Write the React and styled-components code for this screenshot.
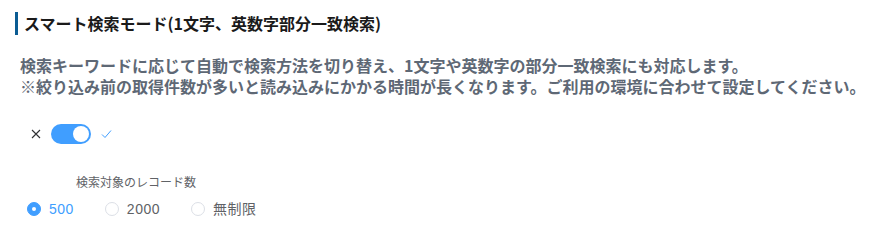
import { useState } from 'react';
import styled, { createGlobalStyle } from 'styled-components';

const GlobalStyle = createGlobalStyle`
  body {
    margin: 0;
    background: #fff;
    font-family: "Noto Sans CJK JP", "Noto Sans", sans-serif;
  }
`;

const options = [
  { value: 500, label: '500' },
  { value: 2000, label: '2000' },
  { value: 0, label: '無制限' },
];

function App() {
  const [smart, setSmart] = useState(true);
  const [limit, setLimit] = useState(500);

  return (
    <Page>
      <GlobalStyle />
      <Title>スマート検索モード(1文字、英数字部分一致検索)</Title>
      <Description>
        検索キーワードに応じて自動で検索方法を切り替え、1文字や英数字の部分一致検索にも対応します。
        <br />
        ※絞り込み前の取得件数が多いと読み込みにかかる時間が長くなります。ご利用の環境に合わせて設定してください。
      </Description>
      <SwitchRow>
        <SideIcon active={!smart}>
          <svg width="10" height="10" viewBox="0 0 10 10">
            <path d="M1 1 L9 9 M9 1 L1 9" stroke="currentColor" strokeWidth="1.1" fill="none" />
          </svg>
        </SideIcon>
        <Switch on={smart} onClick={() => setSmart(!smart)}>
          <Knob on={smart} />
        </Switch>
        <SideIcon active={smart} blue>
          <svg width="11" height="10" viewBox="0 0 11 10">
            <path d="M1 5.5 L4 8.5 L10 1.5" stroke="currentColor" strokeWidth="1" fill="none" />
          </svg>
        </SideIcon>
      </SwitchRow>
      <FieldLabel>検索対象のレコード数</FieldLabel>
      <RadioGroup>
        {options.map((o) => (
          <Radio key={o.value} onClick={() => setLimit(o.value)}>
            <RadioCircle checked={limit === o.value} />
            <RadioText checked={limit === o.value}>{o.label}</RadioText>
          </Radio>
        ))}
      </RadioGroup>
    </Page>
  );
}

export default App;

const Page = styled.div`
  padding: 12px 15px 0;
`;

const Title = styled.h2`
  margin: 0;
  border-left: 3px solid #0b5c93;
  padding-left: 6px;
  font-size: 16px;
  line-height: 23px;
  font-weight: 700;
  color: #1a1a1a;
  white-space: nowrap;
`;

const Description = styled.p`
  margin: 20px 0 0 5px;
  font-size: 16px;
  line-height: 21px;
  font-weight: 700;
  color: #5e6875;
  white-space: nowrap;
`;

const SwitchRow = styled.div`
  display: flex;
  align-items: center;
  margin: 27px 0 0 6px;
  height: 20px;
`;

const SideIcon = styled.span`
  display: flex;
  align-items: center;
  color: ${(p) => (p.blue ? '#409eff' : '#303133')};
  margin: 0 10px;
`;

const Switch = styled.span`
  position: relative;
  display: inline-block;
  width: 40px;
  height: 20px;
  border-radius: 10px;
  background: ${(p) => (p.on ? '#409eff' : '#dcdfe6')};
  cursor: pointer;
`;

const Knob = styled.span`
  position: absolute;
  top: 2px;
  left: ${(p) => (p.on ? '22px' : '2px')};
  width: 16px;
  height: 16px;
  border-radius: 50%;
  background: #fff;
`;

const FieldLabel = styled.div`
  margin: 29px 0 0 61px;
  font-size: 12px;
  line-height: 18px;
  color: #606266;
`;

const RadioGroup = styled.div`
  display: flex;
  align-items: center;
  margin: 8px 0 0 12px;
`;

const Radio = styled.label`
  display: flex;
  align-items: center;
  margin-right: 31px;
  cursor: pointer;
`;

const RadioCircle = styled.span`
  box-sizing: border-box;
  width: 14px;
  height: 14px;
  border-radius: 50%;
  border: 1px solid ${(p) => (p.checked ? '#409eff' : '#dcdfe6')};
  background: ${(p) => (p.checked ? '#409eff' : '#fff')};
  display: flex;
  align-items: center;
  justify-content: center;
  &::after {
    content: '';
    width: 4px;
    height: 4px;
    border-radius: 50%;
    background: #fff;
    display: ${(p) => (p.checked ? 'block' : 'none')};
  }
`;

const RadioText = styled.span`
  padding-left: 8px;
  font-family: "Liberation Sans", "Noto Sans CJK JP", sans-serif;
  font-size: 14px;
  letter-spacing: 0.5px;
  line-height: 20px;
  color: ${(p) => (p.checked ? '#409eff' : '#606266')};
`;
